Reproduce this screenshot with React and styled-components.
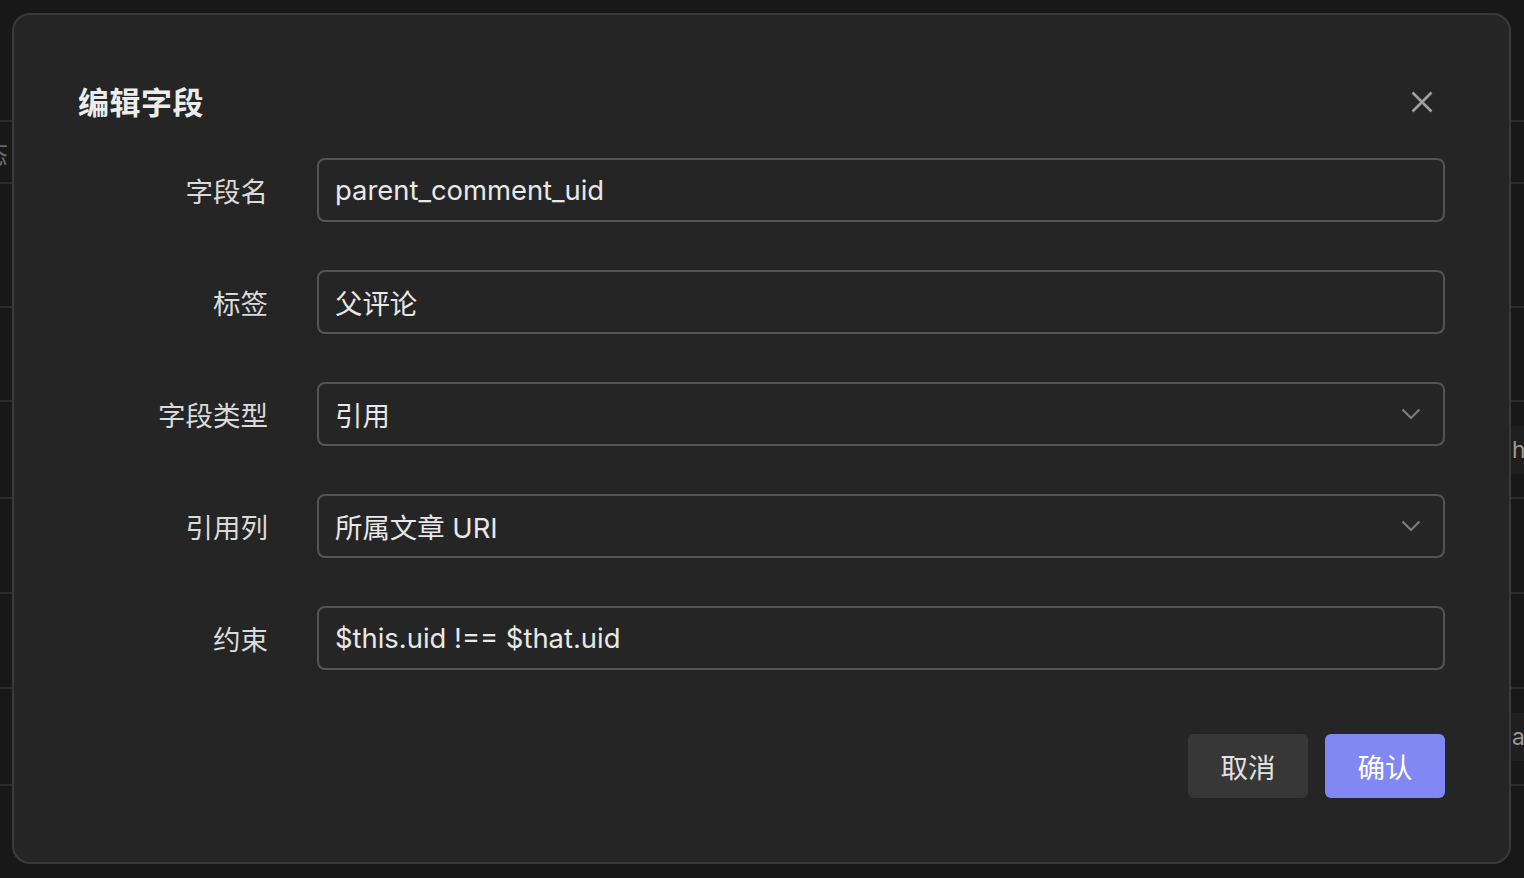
import styled, { createGlobalStyle } from "styled-components";

const Global = createGlobalStyle`
  html, body {
    margin: 0;
    padding: 0;
    background: #181818;
    font-family: "Inter", "Noto Sans CJK SC", sans-serif;
  }
  * { box-sizing: border-box; }
`;

// BACKGROUND TABLE (behind the overlay)
const Page = styled.div`
  position: relative;
  width: 1524px;
  height: 878px;
  overflow: hidden;
  background: #181818;
`;
const Table = styled.div`
  display: flex;
  flex-direction: column;
  padding-top: 120px;
`;
const Row = styled.div`
  height: ${(p) => p.h}px;
  border-top: 2px solid #2c2c2c;
  display: flex;
  justify-content: space-between;
  align-items: center;
  color: #8a8a8a;
  font-size: 24px;
`;
const Side = styled.div`
  flex: 1;
  display: flex;
  justify-content: ${(p) => (p.right ? "flex-end" : "flex-start")};
`;
const RightCell = styled.div`
  width: 13px;
  height: 48px;
  display: flex;
  align-items: center;
  overflow: hidden;
  white-space: nowrap;
  background: #1f1f1f;
  color: #9a9a9a;
  font-size: 23px;
  padding-left: 1px;
`;
const LeftText = styled.div`
  width: 8px;
  overflow: hidden;
  direction: rtl;
  white-space: nowrap;
  color: #6a6a6a;
  font-size: 26px;
`;

// MODAL
const Modal = styled.div`
  position: absolute;
  left: 12px;
  top: 13px;
  width: 1499px;
  padding: 64px;
  background: #252525;
  border: 2px solid #3a3a3a;
  border-radius: 18px;
  display: flex;
  flex-direction: column;
`;
const Header = styled.div`
  display: flex;
  justify-content: space-between;
  align-items: center;
  height: 46px;
`;
const Title = styled.h2`
  margin: -4px 0 0;
  font-size: 31px;
  font-weight: 700;
  color: #ececec;
  letter-spacing: 0.5px;
`;
const Close = styled.button`
  width: 40px;
  height: 40px;
  margin-right: 3px;
  border: none;
  background: none;
  padding: 0;
  display: flex;
  align-items: center;
  justify-content: center;
  cursor: pointer;
`;
const Form = styled.div`
  margin-top: 33px;
  display: grid;
  grid-template-columns: 190px 1fr;
  column-gap: 49px;
  row-gap: 48px;
  align-items: center;
`;
const Label = styled.label`
  text-align: right;
  font-size: 27.5px;
  color: #dadada;
`;
const Input = styled.input`
  height: 64px;
  width: 100%;
  background: transparent;
  border: 2px solid #545454;
  border-radius: 8px;
  padding: 0 16px;
  font-family: inherit;
  font-size: 27.4px;
  color: #e8e8e8;
  outline: none;
`;
const Select = styled.div`
  height: 64px;
  border: 2px solid #545454;
  border-radius: 8px;
  padding: 0 22px 0 16px;
  display: flex;
  align-items: center;
  justify-content: space-between;
  font-size: 27.4px;
  color: #e8e8e8;
`;
const Footer = styled.div`
  margin-top: 64px;
  display: flex;
  justify-content: flex-end;
  gap: 17px;
`;
const Button = styled.button`
  width: 120px;
  height: 64px;
  border: none;
  border-radius: 6px;
  font-family: inherit;
  font-size: 27.5px;
  cursor: pointer;
  background: ${(p) => (p.primary ? "#8188f3" : "#373737")};
  color: ${(p) => (p.primary ? "#ffffff" : "#e2e2e2")};
`;

const Chevron = () => (
  <svg width="20" height="12" viewBox="0 0 20 12" fill="none">
    <path d="M1.5 1.5 L10 10 L18.5 1.5" stroke="#7a7a7a" strokeWidth="2.2" />
  </svg>
);

const XIcon = () => (
  <svg width="22" height="22" viewBox="0 0 22 22" fill="none">
    <path d="M1.5 1.5 L20.5 20.5 M20.5 1.5 L1.5 20.5" stroke="#a0a0a0" strokeWidth="2.6" />
  </svg>
);

const rows = [
  { h: 62, left: "状态" },
  { h: 124 },
  { h: 94 },
  { h: 97, right: "h" },
  { h: 95 },
  { h: 95 },
  { h: 97, right: "ai" },
  { h: 120 },
];

const App = () => {
  return (
    <Page>
      <Global />
      <Table>
        {rows.map((r, i) => (
          <Row key={i} h={r.h}>
            <Side>{r.left && <LeftText>{r.left}</LeftText>}</Side>
            <Side right>{r.right && <RightCell>{r.right}</RightCell>}</Side>
          </Row>
        ))}
      </Table>
      <Modal>
        <Header>
          <Title>编辑字段</Title>
          <Close>
            <XIcon />
          </Close>
        </Header>
        <Form>
          <Label>字段名</Label>
          <Input defaultValue="parent_comment_uid" />
          <Label>标签</Label>
          <Input defaultValue="父评论" />
          <Label>字段类型</Label>
          <Select>
            <span>引用</span>
            <Chevron />
          </Select>
          <Label>引用列</Label>
          <Select>
            <span>所属文章 URI</span>
            <Chevron />
          </Select>
          <Label>约束</Label>
          <Input defaultValue="$this.uid !== $that.uid" />
        </Form>
        <Footer>
          <Button>取消</Button>
          <Button primary>确认</Button>
        </Footer>
      </Modal>
    </Page>
  );
};

export default App;
